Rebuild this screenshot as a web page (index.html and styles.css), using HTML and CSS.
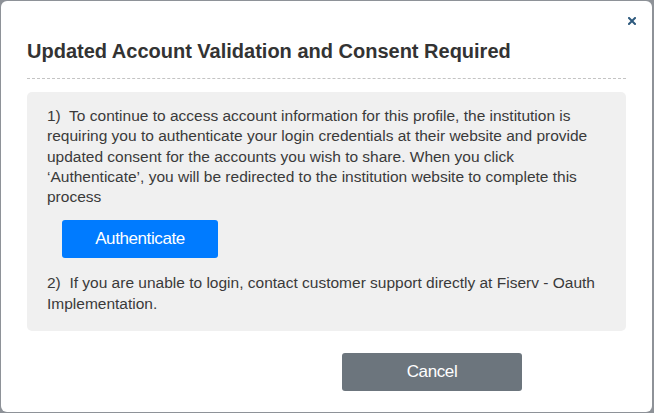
FILE: index.html
```html
<!DOCTYPE html>
<html>
<head>
<meta charset="utf-8">
<link rel="stylesheet" href="styles.css">
</head>
<body>
<div class="modal">
  <div class="close-row">
    <svg class="close" width="8" height="8" viewBox="0 0 8 8" aria-label="Close"><path d="M1 1 L7 7 M7 1 L1 7" stroke="#2e5a7e" stroke-width="2" stroke-linecap="square"/></svg>
  </div>
  <h1 class="title">Updated Account Validation and Consent Required</h1>
  <div class="divider"></div>
  <div class="panel">
    <p class="step">1)&nbsp; To continue to access account information for this profile, the institution is requiring you to authenticate your login credentials at their website and provide updated consent for the accounts you wish to share. When you click ‘Authenticate’, you will be redirected to the institution website to complete this process</p>
    <button class="btn btn-primary">Authenticate</button>
    <p class="step step-2">2)&nbsp; If you are unable to login, contact customer support directly at Fiserv - Oauth Implementation.</p>
  </div>
  <div class="footer">
    <button class="btn btn-secondary">Cancel</button>
  </div>
</div>
</body>
</html>
```
FILE: styles.css
```css
html, body {
  margin: 0;
  padding: 0;
}
body {
  background: #8e9298;
  font-family: "Liberation Sans", Arial, sans-serif;
  width: 654px;
  height: 413px;
  overflow: hidden;
}
.modal {
  box-sizing: border-box;
  margin: 1px 2px 0 1px;
  height: 411px;
  background: #ffffff;
  border-radius: 6px;
  padding: 0 26px 0 26px;
  display: flex;
  flex-direction: column;
}
.close-row {
  display: flex;
  justify-content: flex-end;
  height: 37px;
  padding-top: 16px;
  box-sizing: border-box;
  margin-right: -10px;
}
.close {
  display: block;
}
.title {
  margin: 0;
  font-size: 20px;
  font-weight: bold;
  color: #333333;
  line-height: 26px;
}
.divider {
  margin-top: 14px;
  border-top: 1px dashed #c4c4c4;
}
.panel {
  margin-top: 13px;
  background: #f0f0f0;
  border-radius: 5px;
  padding: 14px 20px 17px 20px;
  display: flex;
  flex-direction: column;
  align-items: flex-start;
}
.step {
  margin: 0;
  font-size: 15.5px;
  line-height: 20.3px;
  color: #3a3a3a;
}
.btn {
  font-family: "Liberation Sans", Arial, sans-serif;
  font-size: 17px;
  letter-spacing: -0.4px;
  color: #ffffff;
  border: none;
  border-radius: 3px;
  height: 38px;
  padding: 0;
}
.btn-primary {
  background: #007bff;
  width: 156px;
  margin: 13px 0 15px 15px;
}
.btn-secondary {
  background: #6c757d;
  width: 180px;
}
.footer {
  display: flex;
  padding-left: 315px;
  margin-top: 22px;
}
```
